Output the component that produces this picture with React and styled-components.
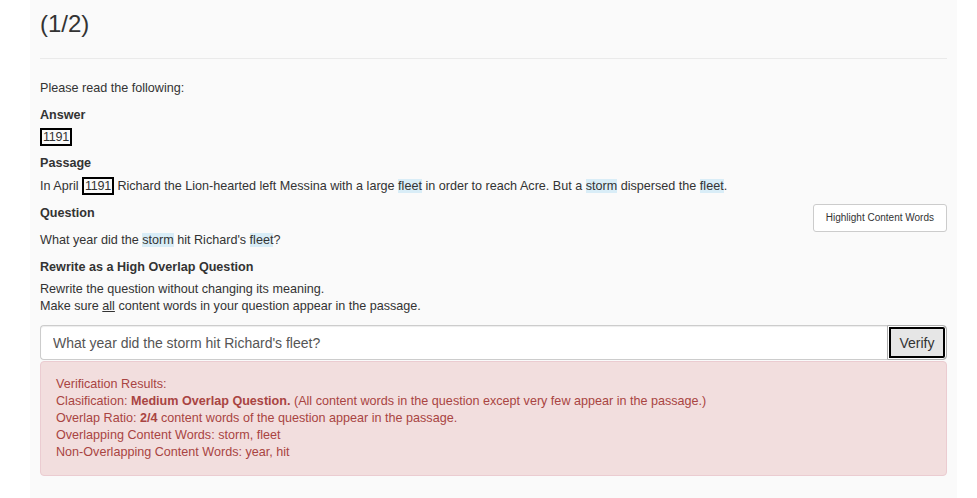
import React from 'react';
import styled, { createGlobalStyle } from 'styled-components';

const Global = createGlobalStyle`
  html, body { margin: 0; padding: 0; background: #fff; }
  body {
    font-family: "Liberation Sans", Arial, sans-serif;
    font-size: 12.6px;
    line-height: 17px;
    color: #333;
  }
`;

const Page = styled.div`
  margin: 0 20px 0 30px;
  padding: 11px 10px 20px;
  background: #fafafa;
  min-height: 467px;
`;

const Title = styled.h1`
  margin: 0;
  font-size: 24px;
  font-weight: 400;
  line-height: 26px;
  color: #333;
`;

const Rule = styled.hr`
  border: 0;
  border-top: 1px solid #eaeaea;
  margin: 21px 0 21px;
`;

const Text = styled.div`
  margin-top: ${p => p.$top || 0}px;
`;

const Label = styled.div`
  font-weight: 700;
  margin-top: ${p => p.$top || 0}px;
`;

const Boxed = styled.span`
  display: inline-block;
  border: 2px solid #000;
  line-height: 14px;
  padding: 0 1px;
  letter-spacing: -0.3px;
`;

const Mark = styled.span`
  background: #d9edf7;
`;

const HeadRow = styled.div`
  display: flex;
  justify-content: space-between;
  align-items: flex-start;
  margin-top: ${p => p.$top || 0}px;
`;

const SmallButton = styled.button`
  box-sizing: border-box;
  font-family: inherit;
  font-size: 10px;
  line-height: 16px;
  color: #333;
  background: #fff;
  border: 1px solid #ccc;
  border-radius: 3px;
  padding: 5px 12px;
  height: 28px;
  margin-top: -1px;
`;

const InputGroup = styled.div`
  display: flex;
  margin-top: 10px;
  height: 35px;
`;

const Field = styled.input`
  flex: 1;
  font-family: inherit;
  font-size: 14px;
  color: #555;
  border: 1px solid #ccc;
  border-right: 0;
  border-radius: 4px 0 0 4px;
  padding: 6px 12px;
  background: #fff;
  outline: none;
  box-shadow: inset 0 1px 1px rgba(0,0,0,0.075);
`;

const VerifyButton = styled.button`
  width: 60px;
  font-family: inherit;
  font-size: 14px;
  color: #333;
  background: #e6e6e6;
  border: 1px solid #adadad;
  border-radius: 0 4px 4px 0;
  box-shadow: inset 0 0 0 1px #fff, inset 0 0 0 3px #000;
  padding: 0;
`;

const Alert = styled.div`
  margin-top: 1px;
  background: #f2dede;
  border: 1px solid #ebccd1;
  border-radius: 4px;
  color: #a94442;
  padding: 14px 15px 14px;
`;

export default function App() {
  return (
    <>
      <Global />
      <Page>
        <Title>(1/2)</Title>
        <Rule />
        <Text>Please read the following:</Text>
        <Label $top={10}>Answer</Label>
        <Text $top={4}><Boxed>1191</Boxed></Text>
        <Label $top={9}>Passage</Label>
        <Text $top={5}>
          In April <Boxed>1191</Boxed> Richard the Lion-hearted left Messina with a large <Mark>fleet</Mark> in order to reach Acre. But a <Mark>storm</Mark> dispersed the <Mark>fleet</Mark>.
        </Text>
        <HeadRow $top={10}>
          <Label>Question</Label>
          <SmallButton>Highlight Content Words</SmallButton>
        </HeadRow>
        <Text>
          What year did the <Mark>storm</Mark> hit Richard's <Mark>fleet</Mark>?
        </Text>
        <Label $top={10}>Rewrite as a High Overlap Question</Label>
        <Text $top={5}>
          Rewrite the question without changing its meaning.<br />
          Make sure <u>all</u> content words in your question appear in the passage.
        </Text>
        <InputGroup>
          <Field defaultValue="What year did the storm hit Richard's fleet?" />
          <VerifyButton>Verify</VerifyButton>
        </InputGroup>
        <Alert>
          Verification Results:<br />
          Clasification: <b>Medium Overlap Question.</b> (All content words in the question except very few appear in the passage.)<br />
          Overlap Ratio: <b>2/4</b> content words of the question appear in the passage.<br />
          Overlapping Content Words: storm, fleet<br />
          Non-Overlapping Content Words: year, hit
        </Alert>
      </Page>
    </>
  );
}
